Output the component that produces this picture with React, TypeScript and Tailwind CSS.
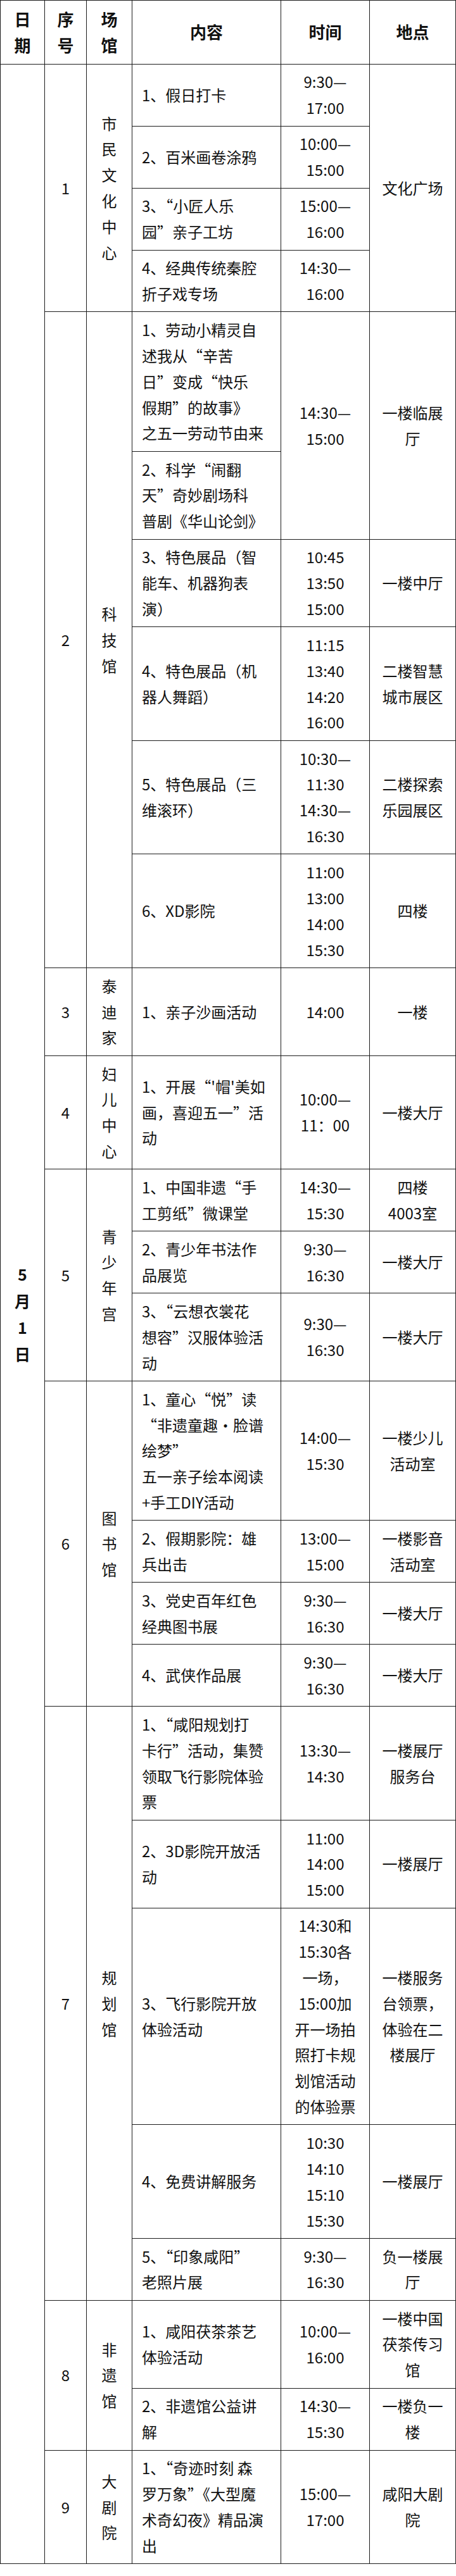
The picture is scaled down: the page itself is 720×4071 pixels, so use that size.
import React from "react";

type Item = { c: string[]; t?: string[]; ts?: number; l?: string[]; ls?: number };
type Venue = { no: string; name: string[]; items: Item[] };

const data: Venue[] = [
  {
    no: "1",
    name: ["市", "民", "文", "化", "中", "心"],
    items: [
      { c: ["1、假日打卡"], t: ["9:30—", "17:00"], l: ["文化广场"], ls: 4 },
      { c: ["2、百米画卷涂鸦"], t: ["10:00—", "15:00"] },
      { c: ["3、“小匠人乐", "园”亲子工坊"], t: ["15:00—", "16:00"] },
      { c: ["4、经典传统秦腔", "折子戏专场"], t: ["14:30—", "16:00"] },
    ],
  },
  {
    no: "2",
    name: ["科", "技", "馆"],
    items: [
      {
        c: ["1、劳动小精灵自", "述我从“辛苦", "日”变成“快乐", "假期”的故事》", "之五一劳动节由来"],
        t: ["14:30—", "15:00"],
        ts: 2,
        l: ["一楼临展", "厅"],
        ls: 2,
      },
      { c: ["2、科学“闹翻", "天”奇妙剧场科", "普剧《华山论剑》"] },
      { c: ["3、特色展品（智", "能车、机器狗表", "演）"], t: ["10:45", "13:50", "15:00"], l: ["一楼中厅"] },
      { c: ["4、特色展品（机", "器人舞蹈）"], t: ["11:15", "13:40", "14:20", "16:00"], l: ["二楼智慧", "城市展区"] },
      { c: ["5、特色展品（三", "维滚环）"], t: ["10:30—", "11:30", "14:30—", "16:30"], l: ["二楼探索", "乐园展区"] },
      { c: ["6、XD影院"], t: ["11:00", "13:00", "14:00", "15:30"], l: ["四楼"] },
    ],
  },
  {
    no: "3",
    name: ["泰", "迪", "家"],
    items: [{ c: ["1、亲子沙画活动"], t: ["14:00"], l: ["一楼"] }],
  },
  {
    no: "4",
    name: ["妇", "儿", "中", "心"],
    items: [{ c: ["1、开展“'帽'美如", "画，喜迎五一”活", "动"], t: ["10:00—", "11：00"], l: ["一楼大厅"] }],
  },
  {
    no: "5",
    name: ["青", "少", "年", "宫"],
    items: [
      { c: ["1、中国非遗“手", "工剪纸”微课堂"], t: ["14:30—", "15:30"], l: ["四楼", "4003室"] },
      { c: ["2、青少年书法作", "品展览"], t: ["9:30—", "16:30"], l: ["一楼大厅"] },
      { c: ["3、“云想衣裳花", "想容”汉服体验活", "动"], t: ["9:30—", "16:30"], l: ["一楼大厅"] },
    ],
  },
  {
    no: "6",
    name: ["图", "书", "馆"],
    items: [
      {
        c: ["1、童心“悦”读", "“非遗童趣·脸谱", "绘梦”", "五一亲子绘本阅读", "+手工DIY活动"],
        t: ["14:00—", "15:30"],
        l: ["一楼少儿", "活动室"],
      },
      { c: ["2、假期影院：雄", "兵出击"], t: ["13:00—", "15:00"], l: ["一楼影音", "活动室"] },
      { c: ["3、党史百年红色", "经典图书展"], t: ["9:30—", "16:30"], l: ["一楼大厅"] },
      { c: ["4、武侠作品展"], t: ["9:30—", "16:30"], l: ["一楼大厅"] },
    ],
  },
  {
    no: "7",
    name: ["规", "划", "馆"],
    items: [
      {
        c: ["1、“咸阳规划打", "卡行”活动，集赞", "领取飞行影院体验", "票"],
        t: ["13:30—", "14:30"],
        l: ["一楼展厅", "服务台"],
      },
      { c: ["2、3D影院开放活", "动"], t: ["11:00", "14:00", "15:00"], l: ["一楼展厅"] },
      {
        c: ["3、飞行影院开放", "体验活动"],
        t: ["14:30和", "15:30各", "一场，", "15:00加", "开一场拍", "照打卡规", "划馆活动", "的体验票"],
        l: ["一楼服务", "台领票，", "体验在二", "楼展厅"],
      },
      { c: ["4、免费讲解服务"], t: ["10:30", "14:10", "15:10", "15:30"], l: ["一楼展厅"] },
      { c: ["5、“印象咸阳”", "老照片展"], t: ["9:30—", "16:30"], l: ["负一楼展", "厅"] },
    ],
  },
  {
    no: "8",
    name: ["非", "遗", "馆"],
    items: [
      { c: ["1、咸阳茯茶茶艺", "体验活动"], t: ["10:00—", "16:00"], l: ["一楼中国", "茯茶传习", "馆"] },
      { c: ["2、非遗馆公益讲", "解"], t: ["14:30—", "15:30"], l: ["一楼负一", "楼"] },
    ],
  },
  {
    no: "9",
    name: ["大", "剧", "院"],
    items: [
      {
        c: ["1、“奇迹时刻 森", "罗万象”《大型魔", "术奇幻夜》精品演", "出"],
        t: ["15:00—", "17:00"],
        l: ["咸阳大剧", "院"],
      },
    ],
  },
];

const totalRows = data.reduce((s, v) => s + v.items.length, 0);

function Lines({ lines }: { lines: string[] }) {
  return (
    <>
      {lines.map((s, i) => (
        <div key={i} className="whitespace-nowrap">
          {s}
        </div>
      ))}
    </>
  );
}

const cell = "border border-[#1c1c1c] py-[7.7px] align-middle";

export default function App() {
  const rows: React.ReactNode[] = [];
  let first = true;
  data.forEach((v) => {
    v.items.forEach((it, i) => {
      rows.push(
        <tr key={v.no + "-" + i}>
          {first && (
            <td rowSpan={totalRows} className={`${cell} px-0 text-center font-bold text-[25px] leading-[42px]`}>
              <Lines lines={["5", "月", "1", "日"]} />
            </td>
          )}
          {i === 0 && (
            <td rowSpan={v.items.length} className={`${cell} px-0 text-center`}>
              {v.no}
            </td>
          )}
          {i === 0 && (
            <td rowSpan={v.items.length} className={`${cell} px-0 text-center`}>
              <Lines lines={v.name} />
            </td>
          )}
          <td className={`${cell} pl-[15px] pr-[2px] text-left`}>
            <Lines lines={it.c} />
          </td>
          {it.t && (
            <td rowSpan={it.ts ?? 1} className={`${cell} px-0 text-center`}>
              <Lines lines={it.t} />
            </td>
          )}
          {it.l && (
            <td rowSpan={it.ls ?? 1} className={`${cell} px-0 text-center`}>
              <Lines lines={it.l} />
            </td>
          )}
        </tr>
      );
      first = false;
    });
  });

  const head = `border border-[#1c1c1c] py-[9px] px-0 align-middle text-center font-bold text-[26px]`;

  return (
    <div className="min-h-[4071px] w-[720px] bg-white">
      <table className="w-[719px] table-fixed border-collapse text-[#111] font-['Noto_Sans_CJK_SC',sans-serif] text-[24px] leading-[40.8px]">
        <colgroup>
          <col className="w-[70px]" />
          <col className="w-[66px]" />
          <col className="w-[72px]" />
          <col className="w-[235px]" />
          <col className="w-[140px]" />
          <col className="w-[136px]" />
        </colgroup>
        <tbody>
          <tr>
            <td className={head}>
              <Lines lines={["日", "期"]} />
            </td>
            <td className={head}>
              <Lines lines={["序", "号"]} />
            </td>
            <td className={head}>
              <Lines lines={["场", "馆"]} />
            </td>
            <td className={head}>内容</td>
            <td className={head}>时间</td>
            <td className={head}>地点</td>
          </tr>
          {rows}
        </tbody>
      </table>
    </div>
  );
}
